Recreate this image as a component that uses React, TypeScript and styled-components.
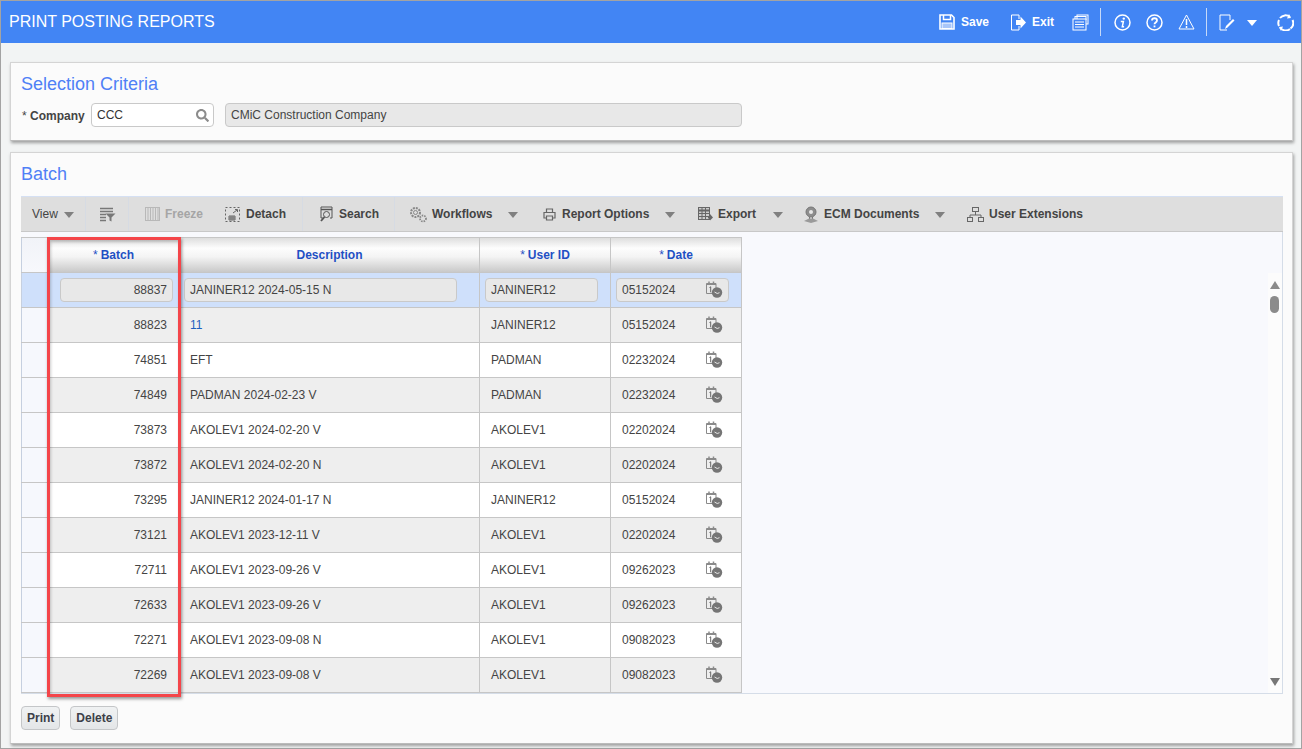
import React from 'react';
import styled, { createGlobalStyle } from 'styled-components';
import { FaSearch } from 'react-icons/fa';

const GlobalStyle = createGlobalStyle`
  html, body { margin: 0; padding: 0; }
  body {
    width: 1302px;
    height: 749px;
    overflow: hidden;
    background: #f2f4f4;
    font-family: "Liberation Sans", Arial, sans-serif;
    font-size: 12px;
  }
  * { box-sizing: border-box; }
`;

const Page = styled.div`
  width: 1302px;
  height: 749px;
  border: 1px solid #a3a3a3;
  display: flex;
  flex-direction: column;
`;

const TopBar = styled.header`
  height: 42px;
  background: #4285f4;
  display: flex;
  align-items: center;
  padding: 0 7px 0 8px;
  color: #fff;
  flex: none;
`;

const PageTitle = styled.h1`
  margin: 0;
  font-size: 16px;
  font-weight: 400;
  flex: 1;
`;

const TopAction = styled.button<{ $w: number }>`
  all: unset;
  width: ${({ $w }) => $w}px;
  display: flex;
  align-items: center;
  gap: 6px;
  font-size: 12px;
  font-weight: 700;
  color: #fff;
  flex: none;
`;

const TopDivider = styled.span<{ $mr: number }>`
  width: 1px;
  height: 28px;
  background: #c6d9f8;
  margin-right: ${({ $mr }) => $mr}px;
  flex: none;
`;

const Content = styled.main`
  flex: 1;
  padding: 19px 8px 5px 9px;
  display: flex;
  flex-direction: column;
  gap: 11px;
`;

const Panel = styled.section<{ $h: number }>`
  height: ${({ $h }) => $h}px;
  background: #fbfbfb;
  border: 1px solid #d4d4d4;
  border-bottom-color: #bbb;
  box-shadow: 1px 2px 3px rgba(0, 0, 0, 0.35);
  padding: 11px 9px 0 10px;
  flex: none;
`;

const PanelTitle = styled.h2`
  margin: 0;
  height: 20px;
  font-size: 18px;
  line-height: 20px;
  font-weight: 400;
  color: #4f80f6;
`;

const FormRow = styled.div`
  display: flex;
  align-items: center;
  margin-top: 9px;
  padding-left: 1px;
`;

const FormLabel = styled.label`
  width: 69px;
  font-weight: 700;
  color: #444;
  flex: none;
  padding-top: 1px;
`;

const Required = styled.span`
  font-weight: 400;
`;

const LookupField = styled.div`
  width: 123px;
  height: 24px;
  background: #fff;
  border: 1px solid #c9c9c9;
  border-radius: 4px;
  display: flex;
  align-items: center;
  justify-content: space-between;
  padding: 0 4px 0 5px;
  color: #333;
  flex: none;
  svg { color: #8c8c8c; }
`;

const ReadOnlyField = styled.div`
  width: 517px;
  height: 24px;
  margin-left: 11px;
  background: #e8e8e8;
  border: 1px solid #c9c9c9;
  border-radius: 4px;
  display: flex;
  align-items: center;
  padding: 0 5px;
  color: #444;
`;

const Toolbar = styled.div`
  height: 36px;
  margin-top: 12px;
  background: #dedede;
  border-top: 1px solid #d5e0f3;
  border-bottom: 1px solid #c8c8c8;
  display: flex;
  align-items: center;
  position: relative;
  font-weight: 700;
  color: #444;
`;

const ToolItem = styled.div<{ $w: number; $gap?: number; $disabled?: boolean; $plain?: boolean }>`
  width: ${({ $w }) => $w}px;
  height: 100%;
  flex: none;
  display: flex;
  align-items: center;
  gap: ${({ $gap }) => $gap ?? 5}px;
  font-weight: ${({ $plain }) => ($plain ? 400 : 700)};
  color: ${({ $disabled }) => ($disabled ? '#a5a5a5' : 'inherit')};
  white-space: nowrap;
`;

const ToolGap = styled.span<{ $w: number; $line?: boolean }>`
  width: ${({ $w }) => $w}px;
  height: 100%;
  flex: none;
  display: flex;
  justify-content: center;
  &::after {
    content: '';
    width: 1px;
    background: ${({ $line }) => ($line ? '#d6dbe3' : 'transparent')};
  }
`;

const Caret = styled.span<{ $light?: boolean }>`
  width: 0;
  height: 0;
  border-left: 5px solid transparent;
  border-right: 5px solid transparent;
  border-top: 6px solid ${({ $light }) => ($light ? '#fff' : '#808080')};
  flex: none;
  margin-top: 2px;
`;

const GridArea = styled.div`
  position: relative;
  height: 462px;
  background: #f8f9fd;
  border-right: 1px solid #d5dde8;
  border-bottom: 1px solid #d5dde8;
`;

const GridTable = styled.div`
  width: 721px;
  padding-top: 5px;
`;

const Row = styled.div<{ $tone: 'head' | 'sel' | 'even' | 'odd' }>`
  display: grid;
  grid-template-columns: 27px 132px 300px 131px 131px;
  height: ${({ $tone }) => ($tone === 'head' ? 36 : 35)}px;
  background: ${({ $tone }) =>
    $tone === 'head'
      ? 'linear-gradient(#dedede 0%, #fdfdfd 30%, #f4f4f4 55%, #c9c9c9 100%)'
      : $tone === 'sel'
        ? '#cfe0fb'
        : $tone === 'even'
          ? '#eeeeee'
          : '#ffffff'};
  border-bottom: 1px solid #c6c6c6;
  border-top: ${({ $tone }) => ($tone === 'head' ? '1px solid #c6c6c6' : 'none')};
`;

const Cell = styled.div<{ $right?: boolean; $pl?: number; $pr?: number }>`
  display: flex;
  align-items: center;
  justify-content: ${({ $right }) => ($right ? 'flex-end' : 'flex-start')};
  padding: 0 ${({ $pr }) => $pr ?? 12}px 0 ${({ $pl }) => $pl ?? 10}px;
  border-right: 1px solid #c6c6c6;
  color: #444;
  min-width: 0;
`;

const SelectorCell = styled.div<{ $tone: 'head' | 'row' | 'sel' }>`
  border-left: 1px solid #c6d0e0;
  background: ${({ $tone }) =>
    $tone === 'row' ? '#f6f8fd' : $tone === 'sel' ? '#cfe0fb' : 'linear-gradient(#f1f3f8, #f7f8fc)'};
`;

const HeadCell = styled.div`
  display: flex;
  align-items: center;
  justify-content: center;
  border-right: 1px solid #c6c6c6;
  color: #1f50c4;
  font-weight: 700;
`;

const HeadStar = styled.span`
  font-weight: 400;
  margin-right: 3px;
`;

const RowField = styled.div<{ $right?: boolean }>`
  flex: 1;
  height: 24px;
  background: #e8e8e8;
  border: 1px solid #c9c9c9;
  border-radius: 4px;
  display: flex;
  align-items: center;
  justify-content: ${({ $right }) => ($right ? 'flex-end' : 'space-between')};
  padding: 0 5px;
  color: #444;
`;

const DateCell = styled.div`
  display: flex;
  align-items: center;
  justify-content: space-between;
  padding: 0 18px 0 11px;
  border-right: 1px solid #c6c6c6;
  color: #444;
`;

const LinkText = styled.span`
  color: #1f5fbf;
`;

const ScrollBar = styled.div`
  position: absolute;
  top: 41px;
  right: 0;
  bottom: 0;
  width: 14px;
  background: #fcfcfc;
`;

const ScrollUp = styled.span`
  position: absolute;
  top: 8px;
  left: 2px;
  border-left: 5px solid transparent;
  border-right: 5px solid transparent;
  border-bottom: 8px solid #8b8b8b;
`;

const ScrollThumb = styled.span`
  position: absolute;
  top: 23px;
  left: 2px;
  width: 9px;
  height: 17px;
  border-radius: 5px;
  background: #8b8b8b;
`;

const ScrollDown = styled.span`
  position: absolute;
  bottom: 7px;
  left: 2px;
  border-left: 5px solid transparent;
  border-right: 5px solid transparent;
  border-top: 8px solid #777;
`;

const Highlight = styled.div`
  position: absolute;
  left: 26px;
  top: 5px;
  width: 134px;
  height: 460px;
  border: 3px solid #f4454a;
  box-shadow: 1px 2px 3px rgba(0, 0, 0, 0.4), inset 1px 2px 3px rgba(0, 0, 0, 0.2);
  pointer-events: none;
`;

const Actions = styled.div`
  display: flex;
  gap: 10px;
  margin-top: 12px;
`;

const ActionButton = styled.button`
  height: 24px;
  padding: 0 5px;
  background: linear-gradient(#f0f2f3, #e4e6e8);
  border: 1px solid #c4c6c8;
  border-radius: 4px;
  font-family: inherit;
  font-size: 12px;
  font-weight: 700;
  color: #3c4048;
`;

const Ico = ({ w = 16, h = 16, children, color = 'currentColor' }: {
  w?: number; h?: number; children: React.ReactNode; color?: string;
}) => (
  <svg width={w} height={h} viewBox={`0 0 ${w} ${h}`} fill="none" stroke={color} strokeWidth="1" style={{ flex: 'none' }}>
    {children}
  </svg>
);

const SaveIcon = () => (
  <Ico w={16} h={16}>
    <path d="M1 1h11.500L15 3.500V15H1z" strokeWidth="1.600" />
    <path d="M4.500 1v4.500h7V1" strokeWidth="1.500" />
    <rect x="3" y="9" width="10" height="5.500" fill="#a9c6f9" stroke="#fff" />
  </Ico>
);

const ExitIcon = () => (
  <Ico w={16} h={17}>
    <path d="M9 5V1H1.500v15H9v-4" />
    <path d="M6 6h4.500V2.500L16 8.500 10.500 14.500V11H6z" fill="#fff" stroke="none" />
  </Ico>
);

const ReportsIcon = () => (
  <Ico w={17} h={17}>
    <rect x="5" y="1" width="11" height="9" />
    <rect x="3" y="2.500" width="11" height="3" />
    <rect x="1" y="5" width="13" height="11" fill="#4285f4" />
    <path d="M3 8h9M3 10.500h9M3 13h9" />
  </Ico>
);

const InfoIcon = () => (
  <Ico w={17} h={17}>
    <circle cx="8.500" cy="8.500" r="7.500" strokeWidth="1.500" />
    <circle cx="9.800" cy="4.600" r="1.200" fill="#fff" stroke="none" />
    <path d="M6.800 7.500h2.600L8.300 12.700h1.800" strokeWidth="1.500" />
  </Ico>
);

const HelpIcon = () => (
  <Ico w={17} h={17}>
    <circle cx="8.500" cy="8.500" r="7.500" strokeWidth="1.500" />
    <path d="M6 6.500c0-3 5-3 5 0 0 2-2.500 2-2.500 3.700" strokeWidth="1.800" />
    <path d="M7.600 11.500h1.800v1.800h-1.800z" fill="#fff" stroke="none" />
  </Ico>
);

const WarnIcon = () => (
  <Ico w={17} h={16}>
    <path d="M8.500 1L16 15H1z" />
    <path d="M8.500 5v6M8.500 12v2" strokeWidth="1.500" />
  </Ico>
);

const NoteIcon = () => (
  <Ico w={16} h={17}>
    <path d="M8 16H1V1h10v5" />
    <path d="M6 15l1-3 7-7 1.500 1.500-7 7z" fill="#fff" stroke="none" />
  </Ico>
);

const RefreshIcon = () => (
  <Ico w={17} h={17}>
    <path d="M3 4a7 7 0 0 1 10-1M15.500 6a7 7 0 0 1-2 8.500M13 15a7 7 0 0 1-10-1.500M2 12a7 7 0 0 1 0-6" strokeWidth="2" />
    <path d="M12 0l2 4-4 .5zM4 17l-2-4 4-.5z" fill="#fff" stroke="none" />
  </Ico>
);

const FilterIcon = () => (
  <Ico w={17} h={15} color="#777">
    <path d="M1 1.500h13M1 4.500h13M1 7.500h6M1 10.500h6M1 13.500h6" strokeWidth="1.300" />
    <path d="M6.500 6.500h10l-4 4v4l-2-1v-3z" fill="#777" stroke="none" />
  </Ico>
);

const FreezeIcon = () => (
  <Ico w={15} h={14} color="#b8b8b8">
    <rect x="0.500" y="0.500" width="14" height="13" />
    <path d="M3 1v12M5.500 1v12M8 1v12M10.500 1v12M13 1v12" />
  </Ico>
);

const DetachIcon = () => (
  <Ico w={15} h={15} color="#666">
    <rect x="0.500" y="0.500" width="14" height="14" strokeDasharray="2 2" />
    <path d="M4 9h6v4H4zM6 9v4M8 9v4M4 11h6" />
    <path d="M8 6l4-3M10 2.500h2.500V5" />
  </Ico>
);

const SearchToolIcon = () => (
  <Ico w={14} h={16} color="#555">
    <path d="M2 1h11v11h-2M2 1v11h2" />
    <path d="M2 3.500h11" strokeWidth="1.500" />
    <circle cx="7.500" cy="8.500" r="3" />
    <path d="M5.500 11L2 15" strokeWidth="1.800" />
  </Ico>
);

const GearsIcon = () => (
  <Ico w={18} h={17} color="#888">
    <circle cx="6.500" cy="6.500" r="4.500" strokeWidth="2" strokeDasharray="2 1" />
    <circle cx="6.500" cy="6.500" r="2" />
    <circle cx="14" cy="12.500" r="3" strokeWidth="1.800" strokeDasharray="1.500 1" />
  </Ico>
);

const PrinterIcon = () => (
  <Ico w={13} h={13} color="#666">
    <path d="M3.500 4V1h6v3" strokeWidth="1.200" />
    <path d="M3 10H1V4.500h11V10h-2" strokeWidth="1.200" />
    <path d="M3.500 8h6v4h-6z" strokeWidth="1.200" />
  </Ico>
);

const ExportIcon = () => (
  <Ico w={15} h={14} color="#666">
    <rect x="0.500" y="0.500" width="11" height="12" fill="#ccc" />
    <path d="M0.500 3.500h11" strokeWidth="2" />
    <path d="M4 1v12M7.500 1v12M1 6.500h10M1 9.500h10" />
    <path d="M10 9h2V7l3 3.500-3 3v-2h-2z" fill="#666" stroke="none" />
  </Ico>
);

const EcmIcon = () => (
  <Ico w={16} h={17} color="#777">
    <circle cx="8" cy="6" r="5" fill="#8d8d8d" />
    <circle cx="8" cy="6" r="2" fill="#e8e8e8" stroke="none" />
    <path d="M6.500 11v2M9.500 11v2" />
    <path d="M1 15l5-2.500h4l5 2.500-7 2z" fill="#9a9a9a" stroke="none" />
  </Ico>
);

const TreeIcon = () => (
  <Ico w={17} h={15} color="#666">
    <rect x="5.500" y="0.500" width="6" height="4" />
    <path d="M8.500 5v3M3 11V8h11v3" />
    <rect x="0.500" y="10.500" width="5" height="4" />
    <rect x="11.500" y="10.500" width="5" height="4" />
  </Ico>
);

const CalendarIcon = () => (
  <Ico w={18} h={18} color="#8a8a8a">
    <path d="M1.500 2.500h9.500v10H1.500z" />
    <path d="M1.500 2.500h9.500v1.500H1.500z" fill="#8a8a8a" stroke="none" />
    <path d="M4 0.500v3M8.500 0.500v3" strokeWidth="1.500" />
    <path d="M4.500 6.500l1.200-.7v5.500" stroke="#666" />
    <circle cx="12" cy="11.500" r="5.200" fill="#757575" stroke="none" />
    <path d="M9.500 11l2.700 1.500 2.300-.8" stroke="#e6e6e6" />
  </Ico>
);

const rows = [
  ['88823', '11', 'JANINER12', '05152024'],
  ['74851', 'EFT', 'PADMAN', '02232024'],
  ['74849', 'PADMAN 2024-02-23 V', 'PADMAN', '02232024'],
  ['73873', 'AKOLEV1 2024-02-20 V', 'AKOLEV1', '02202024'],
  ['73872', 'AKOLEV1 2024-02-20 N', 'AKOLEV1', '02202024'],
  ['73295', 'JANINER12 2024-01-17 N', 'JANINER12', '05152024'],
  ['73121', 'AKOLEV1 2023-12-11 V', 'AKOLEV1', '02202024'],
  ['72711', 'AKOLEV1 2023-09-26 V', 'AKOLEV1', '09262023'],
  ['72633', 'AKOLEV1 2023-09-26 V', 'AKOLEV1', '09262023'],
  ['72271', 'AKOLEV1 2023-09-08 N', 'AKOLEV1', '09082023'],
  ['72269', 'AKOLEV1 2023-09-08 V', 'AKOLEV1', '09082023'],
];

export default function App() {
  return (
    <>
      <GlobalStyle />
      <Page>
        <TopBar>
          <PageTitle>PRINT POSTING REPORTS</PageTitle>
          <TopAction $w={71}><SaveIcon />Save</TopAction>
          <TopAction $w={62}><ExitIcon />Exit</TopAction>
          <TopAction $w={28}><ReportsIcon /></TopAction>
          <TopDivider $mr={13} />
          <TopAction $w={32}><InfoIcon /></TopAction>
          <TopAction $w={32}><HelpIcon /></TopAction>
          <TopAction $w={28}><WarnIcon /></TopAction>
          <TopDivider $mr={12} />
          <TopAction $w={28}><NoteIcon /></TopAction>
          <TopAction $w={30}><Caret $light /></TopAction>
          <TopAction $w={17}><RefreshIcon /></TopAction>
        </TopBar>
        <Content>
          <Panel $h={79}>
            <PanelTitle>Selection Criteria</PanelTitle>
            <FormRow>
              <FormLabel><Required>* </Required>Company</FormLabel>
              <LookupField>CCC<FaSearch size={13} /></LookupField>
              <ReadOnlyField>CMiC Construction Company</ReadOnlyField>
            </FormRow>
          </Panel>
          <Panel $h={592}>
            <PanelTitle>Batch</PanelTitle>
            <Toolbar>
              <ToolGap $w={11} />
              <ToolItem $w={53} $gap={6} $plain>View <Caret /></ToolItem>
              <ToolGap $w={1} $line />
              <ToolGap $w={13} />
              <ToolItem $w={29}><FilterIcon /></ToolItem>
              <ToolGap $w={1} $line />
              <ToolGap $w={16} />
              <ToolItem $w={74} $disabled><FreezeIcon />Freeze</ToolItem>
              <ToolGap $w={6} />
              <ToolItem $w={77} $gap={6}><DetachIcon />Detach</ToolItem>
              <ToolGap $w={1} $line />
              <ToolGap $w={16} />
              <ToolItem $w={75} $gap={6}><SearchToolIcon />Search</ToolItem>
              <ToolGap $w={1} $line />
              <ToolGap $w={14} />
              <ToolItem $w={99}><GearsIcon />Workflows</ToolItem>
              <Caret />
              <ToolGap $w={25} />
              <ToolItem $w={122} $gap={6}><PrinterIcon />Report Options</ToolItem>
              <Caret />
              <ToolGap $w={23} />
              <ToolItem $w={75} $gap={5}><ExportIcon />Export</ToolItem>
              <Caret />
              <ToolGap $w={20} />
              <ToolItem $w={132}><EcmIcon />ECM Documents</ToolItem>
              <Caret />
              <ToolGap $w={22} />
              <ToolItem $w={120} $gap={5}><TreeIcon />User Extensions</ToolItem>
            </Toolbar>
            <GridArea>
              <GridTable>
                <Row $tone="head">
                  <SelectorCell $tone="head" />
                  <HeadCell><HeadStar>*</HeadStar>Batch</HeadCell>
                  <HeadCell>Description</HeadCell>
                  <HeadCell><HeadStar>*</HeadStar>User ID</HeadCell>
                  <HeadCell><HeadStar>*</HeadStar>Date</HeadCell>
                </Row>
                <Row $tone="sel">
                  <SelectorCell $tone="sel" />
                  <Cell $pl={12} $pr={6}><RowField $right>88837</RowField></Cell>
                  <Cell $pl={4} $pr={22}><RowField>JANINER12 2024-05-15 N</RowField></Cell>
                  <Cell $pl={5} $pr={12}><RowField>JANINER12</RowField></Cell>
                  <Cell $pl={5} $pr={12}><RowField>05152024<CalendarIcon /></RowField></Cell>
                </Row>
                {rows.map(([batch, desc, user, date], i) => (
                  <Row key={batch} $tone={i % 2 === 0 ? 'even' : 'odd'}>
                    <SelectorCell $tone="row" />
                    <Cell $right>{batch}</Cell>
                    <Cell>{desc === '11' ? <LinkText>{desc}</LinkText> : desc}</Cell>
                    <Cell $pl={11}>{user}</Cell>
                    <DateCell>{date}<CalendarIcon /></DateCell>
                  </Row>
                ))}
              </GridTable>
              <ScrollBar>
                <ScrollUp />
                <ScrollThumb />
                <ScrollDown />
              </ScrollBar>
              <Highlight />
            </GridArea>
            <Actions>
              <ActionButton>Print</ActionButton>
              <ActionButton>Delete</ActionButton>
            </Actions>
          </Panel>
        </Content>
      </Page>
    </>
  );
}
